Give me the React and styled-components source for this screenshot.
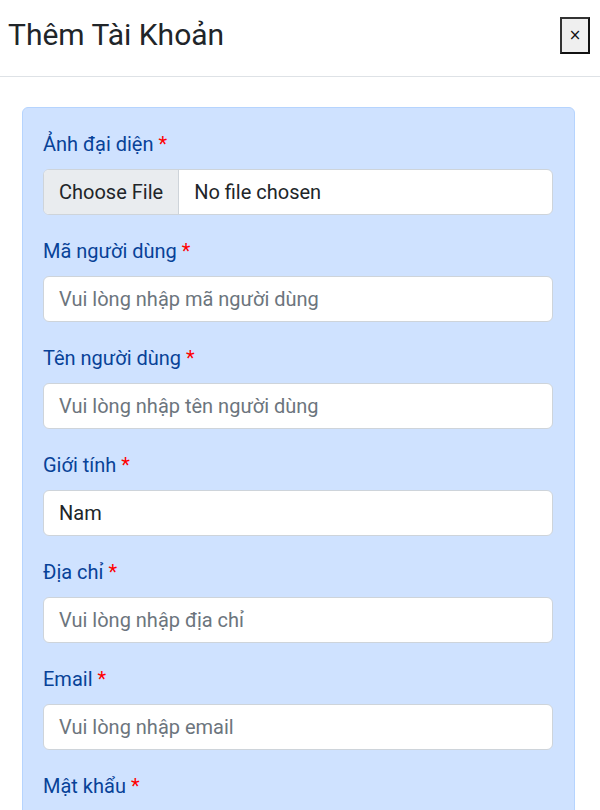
import styled, { createGlobalStyle } from 'styled-components'

const GlobalStyle = createGlobalStyle`
  body {
    margin: 0;
    background: #fff;
    font-family: Roboto, "Noto Sans", "Liberation Sans", sans-serif;
    color: #212529;
  }
`

const fields = [
  { label: 'Mã người dùng', placeholder: 'Vui lòng nhập mã người dùng' },
  { label: 'Tên người dùng', placeholder: 'Vui lòng nhập tên người dùng' },
  { label: 'Giới tính', value: 'Nam' },
  { label: 'Địa chỉ', placeholder: 'Vui lòng nhập địa chỉ' },
  { label: 'Email', placeholder: 'Vui lòng nhập email' },
  { label: 'Mật khẩu', placeholder: 'Vui lòng nhập mật khẩu' },
]

const App = () => {
  return (
    <Modal>
      <GlobalStyle />
      <Header>
        <Title>Thêm Tài Khoản</Title>
        <CloseButton>×</CloseButton>
      </Header>
      <Body>
        <Card>
          <Group>
            <Label>
              Ảnh đại diện <Required>*</Required>
            </Label>
            <FileBox>
              <FileButton>Choose File</FileButton>
              <FileName>No file chosen</FileName>
            </FileBox>
          </Group>
          {fields.map((f) => (
            <Group key={f.label}>
              <Label>
                {f.label} <Required>*</Required>
              </Label>
              <Field $placeholder={!f.value}>{f.value || f.placeholder}</Field>
            </Group>
          ))}
        </Card>
      </Body>
    </Modal>
  )
}

const Modal = styled.main`
  width: 600px;
  height: 810px;
  overflow: hidden;
`

const Header = styled.header`
  height: 77px;
  display: flex;
  align-items: center;
  justify-content: space-between;
  padding: 0 10px 0 8px;
  border-bottom: 1px solid #dee2e6;
  box-sizing: border-box;
`

const Title = styled.h1`
  margin: 0;
  font-size: 30px;
  font-weight: 400;
  color: #212529;
  position: relative;
  top: -4px;
`

const CloseButton = styled.button`
  width: 30px;
  height: 37px;
  padding: 0;
  background: #efefef;
  border: 2px solid #333;
  border-right-color: #111;
  border-bottom-color: #111;
  font-family: "DejaVu Sans", sans-serif;
  font-size: 15px;
  color: #111;
  position: relative;
  top: -3px;
`

const Body = styled.div`
  padding: 30px 25px 0 22px;
`

const Card = styled.section`
  background: #cfe2ff;
  border: 1px solid #b6d4fe;
  border-radius: 6px;
  padding: 22px 21px 20px 20px;
`

const Group = styled.div`
  margin-bottom: 22px;
`

const Label = styled.label`
  display: block;
  font-size: 20px;
  line-height: 28px;
  margin-bottom: 11px;
  color: #084298;
`

const Required = styled.span`
  color: #ff0000;
`

const FileBox = styled.div`
  display: flex;
  height: 46px;
  box-sizing: border-box;
  border: 1px solid #ced4da;
  border-radius: 6px;
  background: #fff;
  overflow: hidden;
  font-size: 20px;
`

const FileButton = styled.span`
  display: flex;
  align-items: center;
  padding: 0 15px;
  background: #e9ecef;
  border-right: 1px solid #ced4da;
  color: #212529;
`

const FileName = styled.span`
  display: flex;
  align-items: center;
  padding: 0 15px;
  color: #212529;
`

const Field = styled.div`
  height: 46px;
  box-sizing: border-box;
  display: flex;
  align-items: center;
  padding: 0 15px;
  border: 1px solid #ced4da;
  border-radius: 6px;
  background: #fff;
  font-size: 20px;
  color: ${(p) => (p.$placeholder ? '#6c757d' : '#212529')};
`

export default App
